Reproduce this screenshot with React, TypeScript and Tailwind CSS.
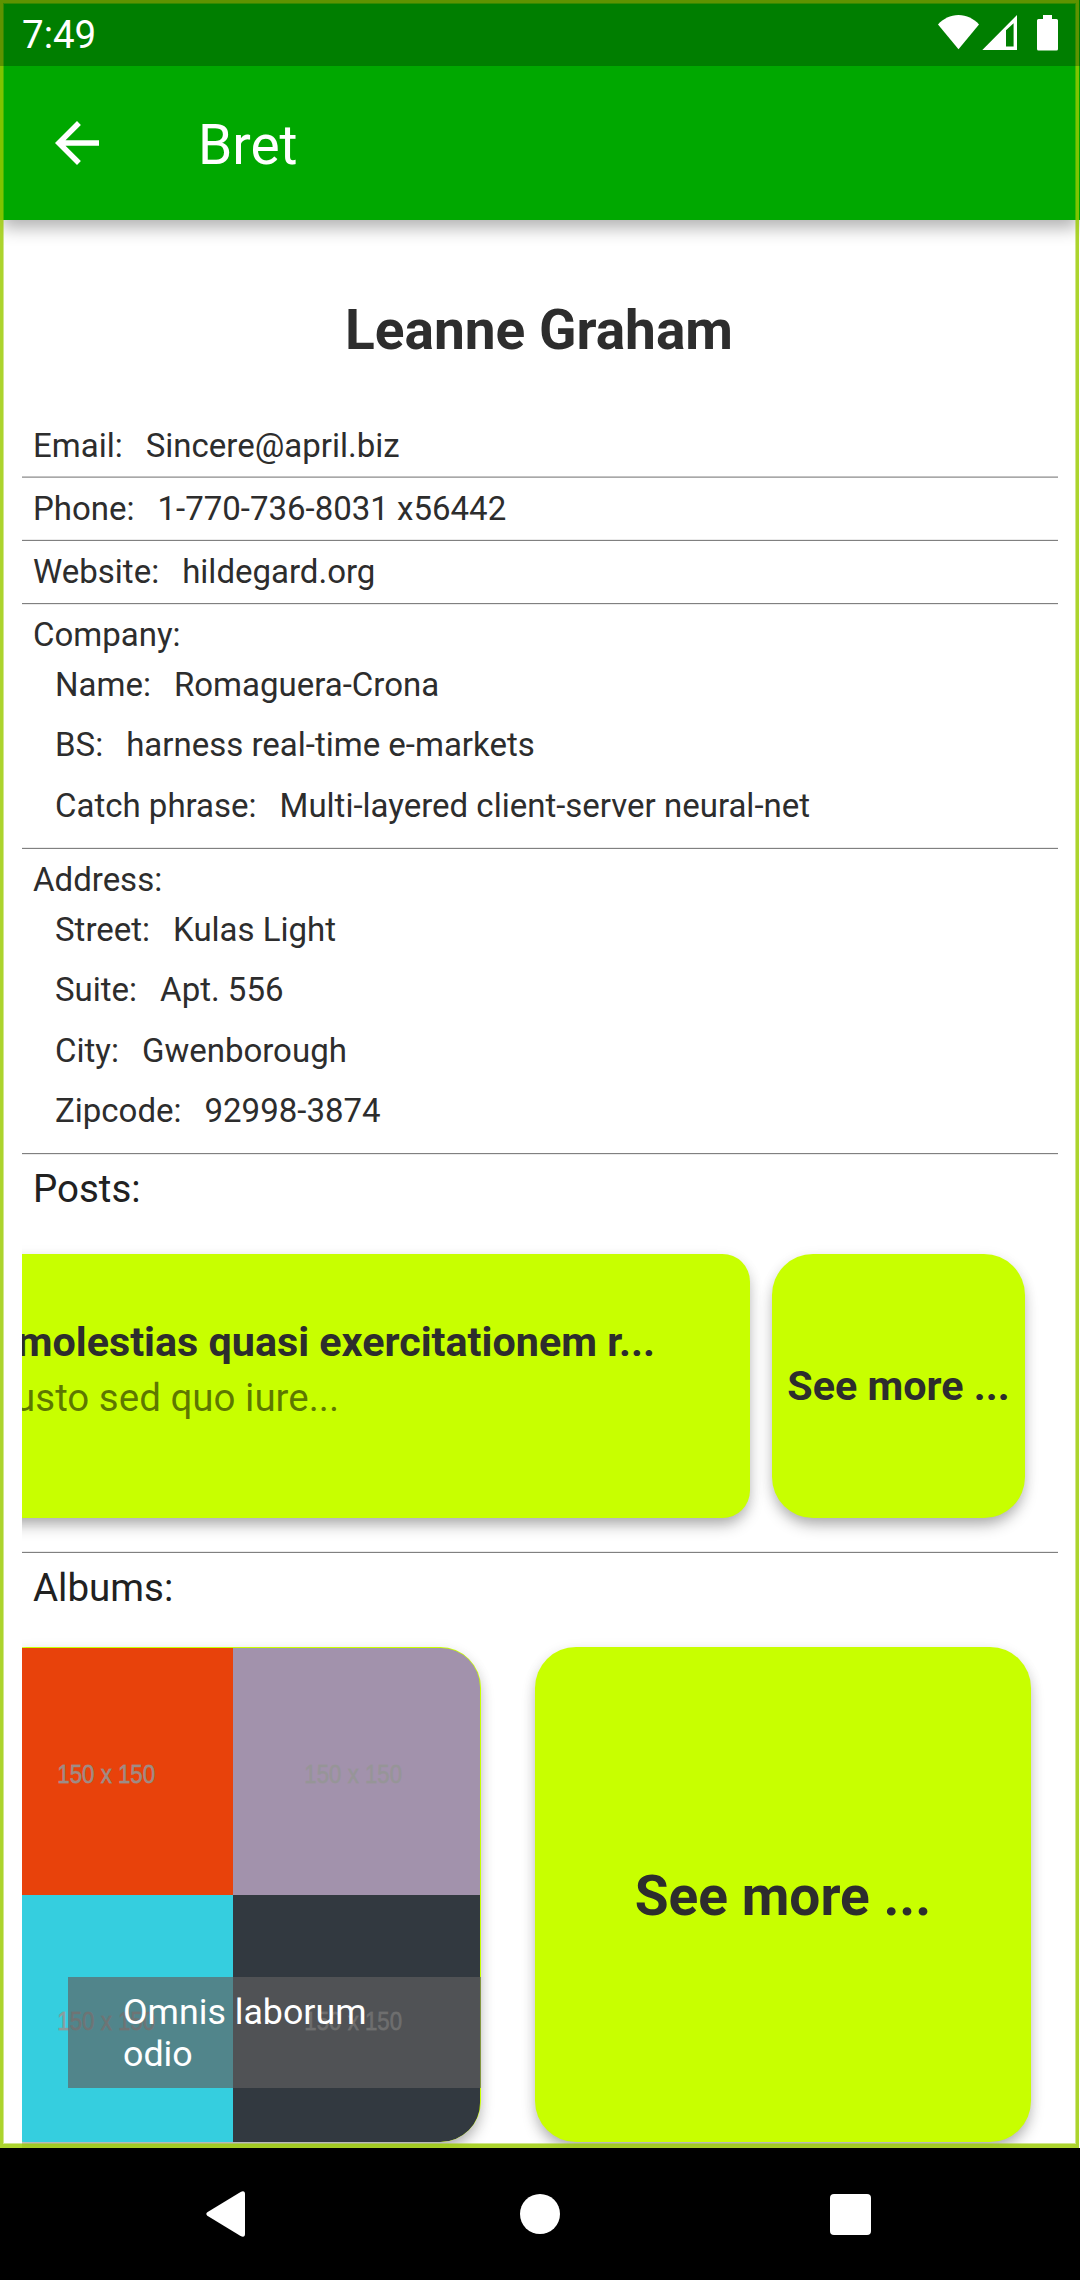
import type { ReactNode } from "react";

function StatusIcons() {
  return (
    <svg width="120" height="36" viewBox="0 0 120 36" fill="#fff" className="mt-[15px]">
      <path d="M0 9.400C5.300 3.600 12.400 0 20.500 0S35.700 3.600 41 9.400L20.500 34.300Z" />
      <path fillRule="evenodd" d="M44.300 35 79 0V35ZM68 15.300V31.500H75.600V8.300Z" />
      <path d="M105 0h9v4h4.500q1.500 0 1.500 1.500V34q0 1.500-1.500 1.500h-18q-1.500 0-1.500-1.500V5.500q0-1.500 1.500-1.500H105Z" />
    </svg>
  );
}

function Header() {
  return (
    <header className="relative z-10 h-[220px] bg-[#00a800] pt-[66px] text-white shadow-[0_10px_16px_-2px_rgba(0,0,0,0.3)]">
      <div className="flex h-[154px] items-center pl-11">
        <svg width="66" height="66" viewBox="0 0 24 24" fill="#fff">
          <path d="M20 11H7.830l5.590-5.590L12 4l-8 8 8 8 1.410-1.410L7.830 13H20z" />
        </svg>
        <span className="ml-[88px] pt-1 text-[55px] leading-[64px]">Bret</span>
      </div>
    </header>
  );
}

function Pair({ label, value }: { label: string; value: string }) {
  return (
    <div className="flex gap-[23px] whitespace-nowrap">
      <span>{label}</span>
      <span>{value}</span>
    </div>
  );
}

function Row({ label, value, rule }: { label: string; value: string; rule: string }) {
  return (
    <div className={`h-[63px] border-b px-[11px] pt-[11px] ${rule}`}>
      <Pair label={label} value={value} />
    </div>
  );
}

function Group({ title, items, rule }: { title: string; items: [string, string][]; rule: string }) {
  return (
    <div className={`border-b px-[11px] pt-[11px] ${rule}`}>
      <div className="h-[50px]">{title}</div>
      <div className="pl-[22px]">
        {items.map(([label, value]) => (
          <div key={label} className="h-[60.4px]">
            <Pair label={label} value={value} />
          </div>
        ))}
      </div>
    </div>
  );
}

const cardShadow = "shadow-[0_9px_16px_-3px_rgba(0,0,0,0.32),0_2px_14px_rgba(0,0,0,0.07)]";

function Card({ className, children }: { className: string; children: ReactNode }) {
  return <div className={`shrink-0 bg-[#c8ff00] ${cardShadow} ${className}`}>{children}</div>;
}

function Thumb({ color }: { color: string }) {
  return (
    <div className={`flex items-center justify-center pt-[4px] pr-[6px] ${color}`}>
      <span className="scale-x-[0.84] font-['Liberation_Sans',sans-serif] text-[26.5px] leading-8 whitespace-nowrap text-[#969696]/85 [-webkit-text-stroke:0.8px_rgba(150,150,150,0.7)]">
        150 x 150
      </span>
    </div>
  );
}

export default function App() {
  return (
    <div className="flex h-[2280px] w-[1080px] flex-col overflow-hidden bg-black font-[Roboto,sans-serif] text-[#2d2d2d]">
      <div className="relative flex h-[2148px] flex-col overflow-hidden bg-white">
        <Header />
        <main className="flex flex-col px-[22px] text-[33px] leading-[39px]">
          <h1 className="h-[195px] pt-[78px] pr-[2px] text-center text-[55px] leading-[64px] font-bold">Leanne Graham</h1>
          <Row label="Email:" value="Sincere@april.biz" rule="border-[#a8a8a8] shadow-[inset_0_-1px_0_#c4c4c4]" />
          <Row label="Phone:" value="1-770-736-8031 x56442" rule="border-[#808080] shadow-[inset_0_-1px_0_#ebebeb]" />
          <Row label="Website:" value="hildegard.org" rule="border-[#808080] shadow-[0_1px_0_#ebebeb]" />
          <Group
            title="Company:"
            rule="h-[245px] border-[#808080] shadow-[inset_0_-1px_0_#ebebeb]"
            items={[
              ["Name:", "Romaguera-Crona"],
              ["BS:", "harness real-time e-markets"],
              ["Catch phrase:", "Multi-layered client-server neural-net"],
            ]}
          />
          <Group
            title="Address:"
            rule="h-[305px] border-[#808080] shadow-[0_1px_0_#ebebeb]"
            items={[
              ["Street:", "Kulas Light"],
              ["Suite:", "Apt. 556"],
              ["City:", "Gwenborough"],
              ["Zipcode:", "92998-3874"],
            ]}
          />

          <section className="h-[399px] border-b border-[#808080] shadow-[inset_0_-1px_0_#ebebeb]">
            <h2 className="h-[78px] px-[11px] pt-3 text-[38.5px] leading-[45px] text-[#212121]">Posts:</h2>
            <div className="flex h-[319px] justify-end gap-[22px] overflow-hidden pt-[22px] pr-[33px]">
              <Card className="flex h-[264px] w-[900px] flex-col items-end rounded-[27.5px] pt-16 pr-[95px]">
                <div className="flex flex-col gap-[9px] whitespace-nowrap">
                  <p className="text-[41.25px] leading-[48px] font-bold">ea molestias quasi exercitationem r...</p>
                  <p className="text-[38.5px] leading-[45px] text-black/54">et iusto sed quo iure...</p>
                </div>
              </Card>
              <Card className="flex h-[264px] w-[253px] items-center justify-center rounded-[41px] text-[41.25px] leading-[48px] font-bold">
                See more ...
              </Card>
            </div>
          </section>

          <section>
            <h2 className="h-[72px] px-[11px] pt-3 text-[38.5px] leading-[45px] text-[#212121]">Albums:</h2>
            <div className="flex h-[523px] justify-end gap-[54px] overflow-hidden pt-[22px] pr-[27px]">
              <Card className="relative h-[495px] w-[495px] overflow-hidden rounded-[41px] pt-px pr-px">
                <div className="grid h-full grid-cols-2 grid-rows-2 overflow-hidden rounded-[39px]">
                  <Thumb color="bg-[#e8420b]" />
                  <Thumb color="bg-[#a292ac]" />
                  <Thumb color="bg-[#35cedf]" />
                  <Thumb color="bg-[#323940]" />
                </div>
                <div className="absolute right-0 bottom-[54px] h-[111px] w-[413px] bg-[#606060]/66 px-[55px] pt-[14px] text-[35.75px] leading-[42px] text-white">
                  Omnis laborum odio
                </div>
              </Card>
              <Card className="flex h-[495px] w-[496px] items-center justify-center rounded-[41px] pt-[3px] text-[55px] leading-[64px] font-bold">
                See more ...
              </Card>
            </div>
          </section>
        </main>

        {/* overscroll frame with a softer inner edge */}
        <div className="absolute top-0 right-px bottom-0 left-0 z-20 border-[3px] border-b-4 border-[#9aca00]/82">
          <div className="h-full border border-[#9aca00]/45" />
        </div>

        {/* translucent system status bar */}
        <div className="absolute inset-x-0 top-0 z-30 flex h-[66px] justify-between bg-black/25 px-[22px] text-white">
          <span className="pt-3 text-[38.5px] leading-[45px]">7:49</span>
          <StatusIcons />
        </div>
      </div>

      <nav className="flex h-[132px] items-center bg-black pl-[206px]">
        <svg width="39" height="46" viewBox="0 0 39 46" fill="#fff">
          <path d="M1.300 21.300 34.600 1Q39-1 39 3.300V42.700Q39 47 34.600 45L1.300 24.700Q-.700 23 1.300 21.300Z" />
        </svg>
        <div className="ml-[275px] h-[40px] w-[40px] rounded-full bg-white" />
        <div className="ml-[270px] h-[41px] w-[41px] rounded-[4px] bg-white" />
      </nav>
    </div>
  );
}
